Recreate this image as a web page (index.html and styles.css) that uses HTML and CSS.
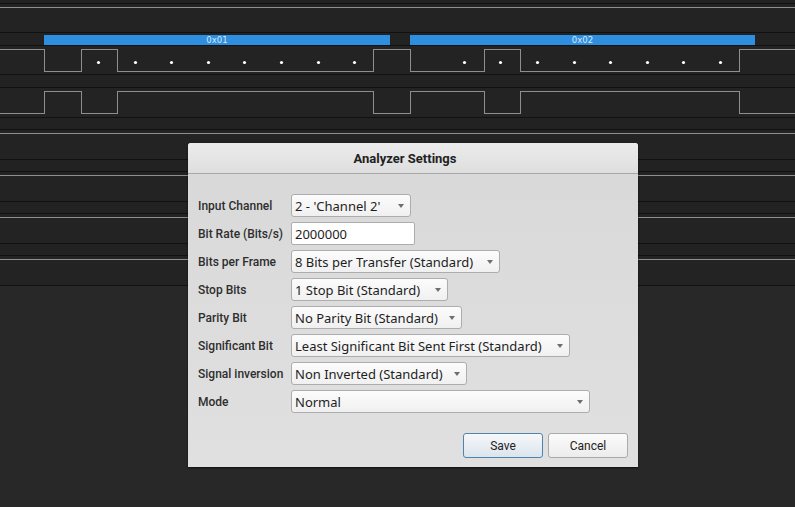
FILE: index.html
```html
<!DOCTYPE html>
<html>
<head>
<meta charset="utf-8">
<link rel="stylesheet" href="styles.css">
</head>
<body>
<div class="tracks">
  <div class="strip strip-top"></div>
  <div class="row row-a"><div class="sig-line"></div></div>
  <div class="strip bubbles">
    <div class="bubble b1">0x01</div>
    <div class="bubble b2">0x02</div>
  </div>
  <div class="row row-a">
    <svg class="wave" width="795" height="28" viewBox="0 0 795 28">
      <polyline class="trace" points="0,3.5 44.5,3.5 44.5,25.5 81.5,25.5 81.5,3.5 117.5,3.5 117.5,25.5 373.5,25.5 373.5,3.5 410.5,3.5 410.5,25.5 484.5,25.5 484.5,3.5 520.5,3.5 520.5,25.5 739.5,25.5 739.5,3.5 795,3.5"/>
      <g class="dots">
        <circle cx="98.5" cy="16.5" r="1.6"/><circle cx="135.5" cy="16.5" r="1.6"/><circle cx="171.5" cy="16.5" r="1.6"/><circle cx="208.5" cy="16.5" r="1.6"/>
        <circle cx="244.5" cy="16.5" r="1.6"/><circle cx="281.5" cy="16.5" r="1.6"/><circle cx="318.5" cy="16.5" r="1.6"/><circle cx="354.5" cy="16.5" r="1.6"/>
        <circle cx="464.5" cy="16.5" r="1.6"/><circle cx="500.5" cy="16.5" r="1.6"/><circle cx="537.5" cy="16.5" r="1.6"/><circle cx="574.5" cy="16.5" r="1.6"/>
        <circle cx="610.5" cy="16.5" r="1.6"/><circle cx="647.5" cy="16.5" r="1.6"/><circle cx="683.5" cy="16.5" r="1.6"/><circle cx="720.5" cy="16.5" r="1.6"/>
      </g>
    </svg>
  </div>
  <div class="strip strip-12"></div>
  <div class="row">
    <svg class="wave" width="795" height="29" viewBox="0 0 795 29">
      <polyline class="trace" points="0,25.5 44.5,25.5 44.5,3.5 81.5,3.5 81.5,25.5 117.5,25.5 117.5,3.5 373.5,3.5 373.5,25.5 410.5,25.5 410.5,3.5 484.5,3.5 484.5,25.5 520.5,25.5 520.5,3.5 739.5,3.5 739.5,25.5 795,25.5"/>
    </svg>
  </div>
  <div class="strip"></div>
  <div class="row"><div class="sig-line"></div></div>
  <div class="strip"></div>
  <div class="row"><div class="sig-line"></div></div>
  <div class="strip"></div>
  <div class="row"><div class="sig-line"></div></div>
  <div class="strip"></div>
  <div class="row"><div class="sig-line"></div></div>
</div>

<div class="dialog">
  <div class="dialog-title">Analyzer Settings</div>
  <div class="dialog-body">
    <div class="form">
      <label>Input Channel</label>
      <div class="field"><div class="combo w-channel"><span>2 - 'Channel 2'</span><i class="arrow"></i></div></div>
      <label>Bit Rate (Bits/s)</label>
      <div class="field"><div class="textbox">2000000</div></div>
      <label>Bits per Frame</label>
      <div class="field"><div class="combo w-frame"><span>8 Bits per Transfer (Standard)</span><i class="arrow"></i></div></div>
      <label>Stop Bits</label>
      <div class="field"><div class="combo w-stop"><span>1 Stop Bit (Standard)</span><i class="arrow"></i></div></div>
      <label>Parity Bit</label>
      <div class="field"><div class="combo w-parity"><span>No Parity Bit (Standard)</span><i class="arrow"></i></div></div>
      <label>Significant Bit</label>
      <div class="field"><div class="combo w-sig"><span>Least Significant Bit Sent First (Standard)</span><i class="arrow"></i></div></div>
      <label>Signal inversion</label>
      <div class="field"><div class="combo w-inv"><span>Non Inverted (Standard)</span><i class="arrow"></i></div></div>
      <label>Mode</label>
      <div class="field"><div class="combo w-mode"><span>Normal</span><i class="arrow"></i></div></div>
    </div>
    <div class="buttons">
      <div class="btn btn-default">Save</div>
      <div class="btn">Cancel</div>
    </div>
  </div>
</div>
</body>
</html>
```

FILE: styles.css
```css
html, body {
  margin: 0;
  padding: 0;
}
body {
  width: 795px;
  height: 507px;
  background: #282828;
  overflow: hidden;
  position: relative;
  font-family: Roboto, "Noto Sans", sans-serif;
}

.tracks {
  display: flex;
  flex-direction: column;
}
.strip {
  height: 11px;
  background: #222222;
  border-bottom: 1px solid #111111;
}
.strip-top { height: 3px; }
.strip-12 { height: 12px; }
.row {
  height: 29px;
  background: #232323;
  border-bottom: 1px solid #111111;
}
.row-a { height: 28px; }
.sig-line {
  margin-top: 3px;
  height: 1px;
  background: #8e8e8e;
}
.wave { display: block; }
.trace {
  fill: none;
  stroke: #8e8e8e;
  stroke-width: 1;
  shape-rendering: crispEdges;
}
.dots circle { fill: #ffffff; }

.bubbles {
  height: 12px;
  position: relative;
}
.bubble {
  position: absolute;
  bottom: 0;
  height: 10px;
  background: #2e8fe1;
  color: #d8e9fa;
  font-family: "DejaVu Sans", sans-serif;
  font-size: 8.5px;
  line-height: 10px;
  text-align: center;
}
.b1 { left: 44px; width: 346px; }
.b2 { left: 410px; width: 345px; }

.dialog {
  position: absolute;
  left: 188px;
  top: 143px;
  width: 450px;
  height: 324px;
  background: #dcdcdc;
  border-radius: 3px 3px 0 0;
  display: flex;
  flex-direction: column;
  box-shadow: 0 1px 2px rgba(0,0,0,0.6);
}
.dialog-title {
  height: 30px;
  border-bottom: 1px solid #a8a8a8;
  background: linear-gradient(#ececec, #dedede);
  border-radius: 3px 3px 0 0;
  font-weight: 700;
  font-size: 13px;
  color: #222222;
  display: flex;
  align-items: center;
  justify-content: center;
  padding-right: 16px;
}
.dialog-body {
  flex: 1;
  padding: 20px 10px 9px 10px;
  display: flex;
  flex-direction: column;
  background: linear-gradient(#d9d9d9, #e0e0e0);
}
.form {
  display: grid;
  grid-template-columns: 92px 1fr;
  grid-auto-rows: 22px;
  row-gap: 6px;
}
.form label {
  font-size: 12px;
  font-weight: 500;
  color: #2e2e2e;
  display: flex;
  align-items: center;
  padding-top: 1px;
}
.field {
  display: flex;
  padding-left: 1px;
}
.combo, .textbox {
  box-sizing: border-box;
  height: 23px;
  border: 1px solid #adadad;
  border-radius: 3px;
  font-family: "Noto Sans", sans-serif;
  font-size: 13px;
  color: #1e1e1e;
  display: flex;
  align-items: center;
  padding: 0 6px 0 3px;
}
.combo {
  background: linear-gradient(#fcfcfc, #f0f0f0);
}
.combo span { white-space: nowrap; }
.w-channel { width: 120px; }
.w-frame { width: 209px; }
.w-stop { width: 157px; }
.w-parity { width: 171px; }
.w-sig { width: 279px; }
.w-inv { width: 176px; }
.w-mode { width: 299px; }
.textbox {
  width: 124px;
  background: #ffffff;
  border-radius: 2px;
}
.arrow {
  margin-left: auto;
  width: 0;
  height: 0;
  border-left: 3.5px solid transparent;
  border-right: 3.5px solid transparent;
  border-top: 4px solid #6e6e6e;
}
.buttons {
  margin-top: auto;
  display: flex;
  justify-content: flex-end;
  gap: 5px;
}
.btn {
  box-sizing: border-box;
  width: 80px;
  height: 25px;
  border: 1px solid #aaaaaa;
  border-radius: 3px;
  background: linear-gradient(#fbfbfb, #ececec);
  font-size: 12px;
  color: #222222;
  display: flex;
  align-items: center;
  justify-content: center;
}
.btn-default {
  border-color: #4f84ae;
  background: linear-gradient(#f6f8fa, #dbe4ec);
}
```
